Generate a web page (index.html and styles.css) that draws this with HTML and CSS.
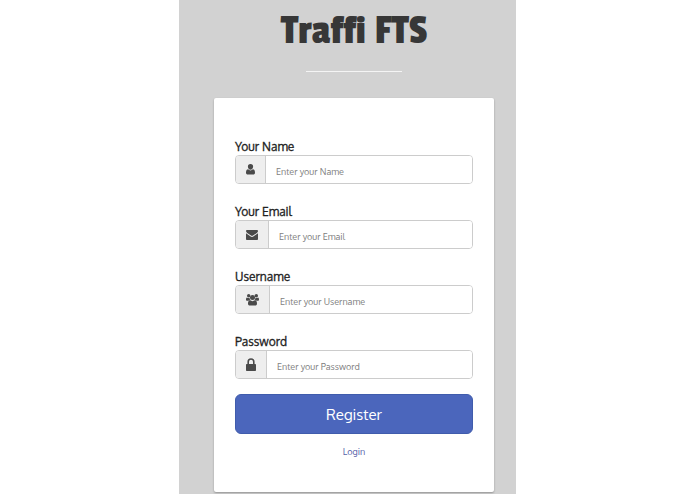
FILE: index.html
```html
<!DOCTYPE html>
<html lang="en">
<head>
    <meta charset="UTF-8" />
    <meta name="viewport" content="width=device-width, initial-scale=1" />
    <title>Traffi FTS</title>
    <link rel="stylesheet" href="styles.css">
</head>
<body>
    <div class="container">
        <h1 class="title">Traffi FTS</h1>
        <hr />
        <form class="main-login" method="post" action="#">
            <div class="form-group">
                <label for="name">Your Name</label>
                <div class="input-group">
                    <span class="addon">
                        <svg width="9" height="11" viewBox="0 0 10 12"><path d="M5 0a2.9 2.9 0 0 1 2.9 3C7.900 4.700 6.600 6.200 5 6.200S2.100 4.700 2.100 3A2.900 2.900 0 0 1 5 0zM2.400 5.700C3.100 6.500 4 7 5 7s1.900-.5 2.600-1.300C9.400 5.800 10 7.600 10 9.500 10 10.800 9.200 11.500 8 11.500H2C.8 11.500 0 10.800 0 9.500c0-1.900.6-3.700 2.400-3.800z"/></svg>
                    </span>
                    <input type="text" id="name" name="name" placeholder="Enter your Name" />
                </div>
            </div>
            <div class="form-group">
                <label for="email">Your Email</label>
                <div class="input-group">
                    <span class="addon">
                        <svg width="12" height="10" viewBox="0 0 12 10"><path d="M0 1.100C0 .4.500 0 1.100 0h9.800c.6 0 1.100.5 1.100 1.100 0 .8-.5 1.400-1.200 1.900L7 5.600c-.7.500-1.300.5-2 0L1.200 3C.5 2.500 0 1.900 0 1.100zM0 3.200l4.300 3c1.200.9 2.200.9 3.400 0l4.300-3v5.700c0 .6-.5 1.100-1.100 1.100H1.100C.5 10 0 9.500 0 8.900z"/></svg>
                    </span>
                    <input type="text" id="email" name="email" placeholder="Enter your Email" />
                </div>
            </div>
            <div class="form-group">
                <label for="username">Username</label>
                <div class="input-group">
                    <span class="addon">
                        <svg width="13" height="12" viewBox="0 0 13 12"><circle cx="2.700" cy="1.800" r="1.700"/><circle cx="10.300" cy="1.800" r="1.700"/><circle cx="6.500" cy="3.500" r="2.500"/><path d="M1 3.500c1 .6 1.800.6 2.600.3 0 1 .2 1.600.7 2.200-.8 0-1.400.3-1.900.8H1.300C.5 6.800 0 6.400 0 5.700c0-.9.200-2.200 1-2.200zM12 3.500c-1 .6-1.800.6-2.600.3 0 1-.2 1.600-.7 2.200.8 0 1.400.3 1.900.8h1.100c.8 0 1.300-.4 1.300-1.100 0-.9-.2-2.200-1-2.200zM4.200 6.300c1.500 1.100 3.100 1.100 4.600 0 1.600 0 2.200 1.600 2.200 3.400 0 1.200-.7 1.800-1.800 1.800H3.800C2.700 11.500 2 10.900 2 9.700c0-1.800.6-3.400 2.200-3.400z"/></svg>
                    </span>
                    <input type="text" id="username" name="username" placeholder="Enter your Username" />
                </div>
            </div>
            <div class="form-group">
                <label for="password">Password</label>
                <div class="input-group">
                    <span class="addon">
                        <svg width="10" height="13" viewBox="0 0 10 13"><path fill-rule="evenodd" d="M1.400 6V3.800a3.600 3.600 0 0 1 7.200 0V6h.4c.6 0 1 .4 1 1v5c0 .6-.4 1-1 1H1c-.6 0-1-.4-1-1V7c0-.6.4-1 1-1zM3 6h4V3.800a2 2 0 0 0-4 0z"/></svg>
                    </span>
                    <input type="password" id="password" name="password" placeholder="Enter your Password" />
                </div>
            </div>
            <button type="submit" class="register-btn">Register</button>
            <div class="login-register">
                <a href="#">Login</a>
            </div>
        </form>
    </div>
</body>
</html>
```
FILE: styles.css
```css
* {
    box-sizing: border-box;
}

body {
    margin: 0;
    background-color: #fff;
    color: #222;
    font-family: 'Oxygen', 'Noto Sans', sans-serif;
    font-size: 12px;
}

.container {
    max-width: 337px;
    min-height: 100vh;
    margin: 0 auto;
    padding: 8px 22px 1px 35px;
    background-color: #d2d2d2;
}

.title {
    margin: 0;
    color: #373737;
    font-family: 'Passion One', 'Roboto', sans-serif;
    font-size: 43px;
    font-weight: 400;
    line-height: 46px;
    text-align: center;
}

hr {
    width: 96px;
    margin: 17px auto 26px;
    border: 0;
    border-top: 1px solid #f4f4f4;
}

.main-login {
    padding: 40px 21px 32px;
    background-color: #fff;
    border-radius: 2px;
    box-shadow: 0 1px 2px rgba(0, 0, 0, 0.3);
}

.form-group {
    margin-bottom: 19px;
}

.form-group:last-of-type {
    margin-bottom: 16px;
}

label {
    display: block;
    line-height: 17px;
    -webkit-text-stroke: 0.3px #222;
}

.input-group {
    display: flex;
    height: 29px;
    border: 1px solid #ccc;
    border-radius: 4px;
    overflow: hidden;
}

.addon {
    display: flex;
    align-items: center;
    padding: 0 10px;
    background-color: #eee;
    border-right: 1px solid #ccc;
}

.addon svg {
    fill: #4a4a4a;
}

.input-group input {
    flex: 1;
    min-width: 0;
    padding: 4px 10px 0;
    border: 0;
    outline: none;
    background-color: #fff;
    color: #555;
    font-family: inherit;
    font-size: 9px;
}

.input-group input::placeholder {
    color: #808080;
}

.form-group:nth-of-type(4) {
    margin-bottom: 15px;
}

.register-btn {
    display: block;
    width: 100%;
    height: 40px;
    padding: 0;
    border: 1px solid #405cac;
    border-radius: 6px;
    background-color: #4b66bc;
    color: #fff;
    font-family: inherit;
    font-size: 15px;
    cursor: pointer;
}

.login-register {
    margin-top: 10px;
    line-height: 16px;
    font-size: 9px;
    text-align: center;
}

.login-register a {
    color: #5660a8;
    text-decoration: none;
}
```
